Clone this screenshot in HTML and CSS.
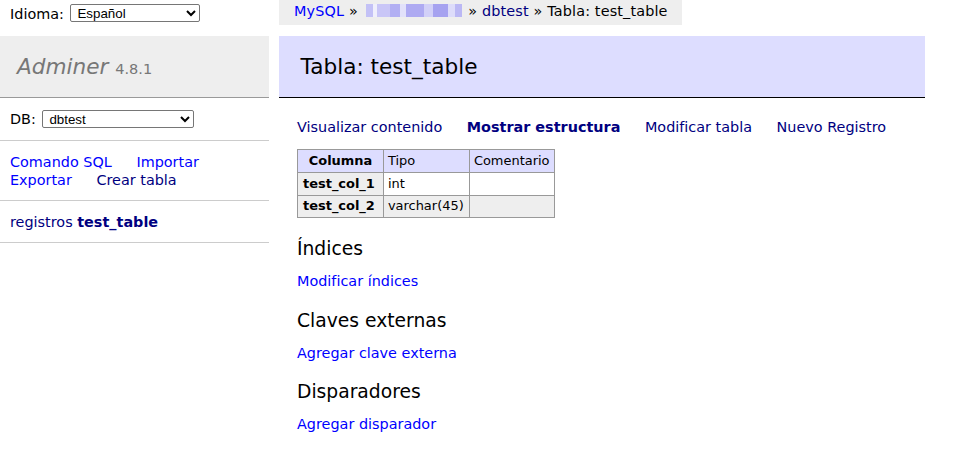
FILE: index.html
```html
<!DOCTYPE html>
<html lang="es">
<head>
<meta charset="utf-8">
<title>Estructura: test_table - Adminer</title>
<link rel="stylesheet" href="styles.css">
</head>
<body>
<div class="top">
  <div class="lang">Idioma: <select class="sel sel-lang"><option>Español</option></select></div>
  <div class="breadcrumb">
    <a href="#" class="lnk">MySQL</a> » <span class="blur"><i class="b1"></i><i class="b2"></i><i class="b3"></i><i class="b4"></i><i class="b5"></i><i class="b6"></i><i class="b7"></i><i class="b8"></i><i class="b9"></i><i class="b10"></i></span> » <a href="#" class="vis">dbtest</a> » Tabla: test_table
  </div>
</div>
<div class="page">
  <div class="menu">
    <h1><a href="#" class="h1link">Adminer</a> <span class="version">4.8.1</span></h1>
    <p class="dbs">DB: <select class="sel sel-db"><option>dbtest</option></select></p>
    <p class="links"><a href="#" class="lnk">Comando SQL</a> <a href="#" class="lnk">Importar</a><br><a href="#" class="lnk">Exportar</a> <a href="#" class="vis">Crear tabla</a></p>
    <p class="tables"><a href="#" class="vis">registros</a> <a href="#" class="vis active">test_table</a></p>
  </div>
  <div class="content">
    <h2>Tabla: test_table</h2>
    <p class="links nav"><a href="#" class="vis">Visualizar contenido</a> <a href="#" class="vis active">Mostrar estructura</a> <a href="#" class="vis">Modificar tabla</a> <a href="#" class="vis">Nuevo Registro</a></p>
    <table class="struct">
      <colgroup><col class="c1"><col class="c2"><col class="c3"></colgroup>
      <thead><tr><th>Columna</th><td>Tipo</td><td>Comentario</td></tr></thead>
      <tbody>
        <tr><th>test_col_1</th><td>int</td><td></td></tr>
        <tr class="odd"><th>test_col_2</th><td>varchar(45)</td><td></td></tr>
      </tbody>
    </table>
    <h3>Índices</h3>
    <p class="sec"><a href="#" class="lnk">Modificar índices</a></p>
    <h3>Claves externas</h3>
    <p class="sec"><a href="#" class="lnk">Agregar clave externa</a></p>
    <h3>Disparadores</h3>
    <p class="sec"><a href="#" class="lnk">Agregar disparador</a></p>
  </div>
</div>
</body>
</html>
```

FILE: styles.css
```css
body {
  margin: 0;
  color: #000;
  background: #fff;
  font: 14.4px/1.25 "DejaVu Sans", Verdana, sans-serif;
  width: 925px;
}
a { text-decoration: none; }
.lnk { color: #00f; }
.vis { color: navy; }
.active { font-weight: bold; }

.top {
  display: flex;
  height: 36px;
}
.lang {
  width: 259px;
  padding: 0 0 0 10px;
  height: 28px;
  line-height: 28px;
  white-space: nowrap;
}
.sel {
  font: 13.33px "Liberation Sans", Arial, sans-serif;
  color: #000;
  background: #fff;
  border: 1px solid #767676;
  border-radius: 2px;
  height: 18px;
  padding: 0 0 0 2px;
  box-sizing: border-box;
}
.sel-lang { width: 130px; margin-left: 2px; vertical-align: 1px; }
.sel-db { width: 152px; margin-left: 2px; vertical-align: top; }
.breadcrumb {
  margin-left: 10px;
  background: #eee;
  height: 25px;
  line-height: 22px;
  padding: 0 14px 0 15px;
  white-space: nowrap;
  letter-spacing: 0.15px;
}
.blur {
  display: inline-flex;
  vertical-align: -1px;
  height: 13px;
  width: 96px;
  margin: 0 2px 0 3px;
  align-items: stretch;
}
.blur i { display: block; flex: 1; }
.blur .b1 { background: #c3c1f6; flex: 0.6; }
.blur .b2 { background: #efeffc; flex: 0.3; }
.blur .b3 { background: #c9c6f7; }
.blur .b4 { background: #b2aff3; flex: 0.8; }
.blur .b5 { background: #e2e1fa; flex: 0.5; }
.blur .b6 { background: #aeaaf2; flex: 1.4; }
.blur .b7 { background: #d2d0f8; flex: 0.7; }
.blur .b8 { background: #a6a2f0; flex: 1.2; }
.blur .b9 { background: #dddcfa; flex: 0.6; }
.blur .b10 { background: #bbb8f4; flex: 0.5; }

.page {
  display: flex;
  gap: 10px;
  align-items: flex-start;
}
.menu { width: 269px; flex: none; }
.menu h1 {
  margin: 0;
  font-size: 21.6px;
  font-weight: normal;
  line-height: 27px;
  height: 27px;
  overflow: hidden;
  padding: 17px 0 17px 17px;
  background: #eee;
  border-bottom: 1px solid #999;
  color: #777;
}
.h1link { color: #777; font-style: italic; }
.version { font-size: 14.5px; color: #777; line-height: 1; }
.menu p {
  margin: 0;
  padding: 11.5px 10px 11.5px;
  border-bottom: 1px solid #ccc;
  white-space: nowrap;
  line-height: 18px;
}
.menu .dbs { padding-top: 12px; padding-bottom: 12px; height: 18px; }
.menu .links a { margin-right: 20px; }

.content {
  width: 628px;
  padding-left: 18px;
}
h2 {
  margin: 0 0 20px -18px;
  padding: 17px 21.6px;
  font-size: 21.6px;
  line-height: 27px;
  font-weight: normal;
  background: #ddf;
  border-bottom: 1px solid #000;
}
.nav { margin: 0; }
.nav a { margin-right: 20px; white-space: nowrap; }
.struct {
  margin: 13px 0 0;
  border-collapse: collapse;
  font-size: 12.96px;
  line-height: 1.25;
  table-layout: fixed;
  width: 257px;
}
.struct .c1 { width: 86px; }
.struct .c2 { width: 86px; }
.struct .c3 { width: 85px; }
.struct td, .struct th {
  border: 1px solid #999;
  padding: 2.8px 3.9px;
  text-align: left;
  white-space: nowrap;
  overflow: hidden;
}
.struct th { background: #eee; padding-left: 5px; }
.struct thead th, .struct thead td { background: #ddf; }
.struct thead th { text-align: center; padding: 2.8px 4px; }
.struct tr.odd td { background: #eee; }
h3 {
  margin: 18.7px 0 0;
  font-size: 18.72px;
  line-height: 23.4px;
  font-weight: normal;
}
.sec { margin: 11.5px 0 0; }
```
